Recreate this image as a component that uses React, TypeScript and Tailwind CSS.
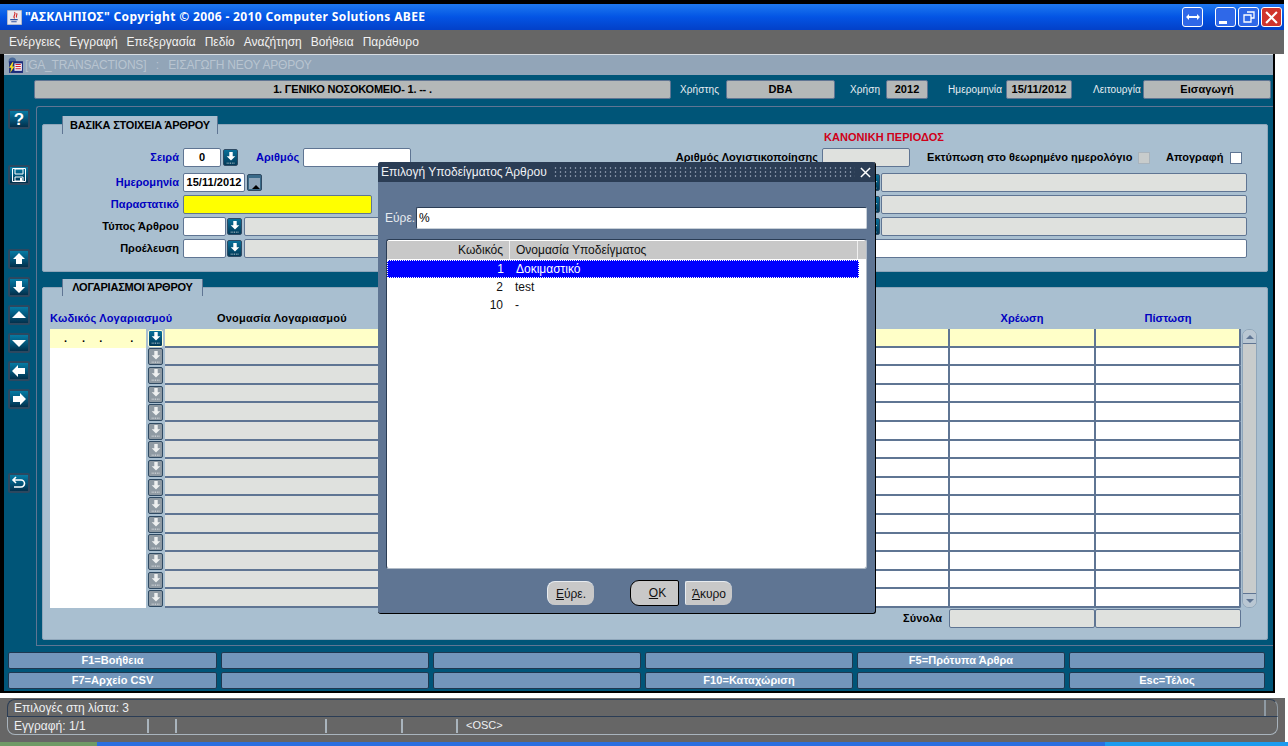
const labelBase = "font-['Liberation_Sans',sans-serif] text-[11px] font-bold tracking-[0.05px]"
const capsLabel = "font-['Liberation_Sans',sans-serif] text-[11px] font-bold tracking-[-0.2px]"
const plainText = "font-['Liberation_Sans',sans-serif] text-[12px]"

function ArrowDown({ dim }: { dim?: boolean }) {
  return (
    <svg viewBox="0 0 14 16" className="h-[14px] w-[12px]">
      <polygon points="5,1 9,1 9,6 12,6 7,11 2,6 5,6" fill={dim ? '#eef0f0' : '#ffffff'} />
      <line x1="2" y1="14" x2="12" y2="14" stroke="#ffffff" strokeWidth="1" strokeDasharray="1 1" />
    </svg>
  )
}

function LovButton({ dim, focus }: { dim?: boolean; focus?: boolean }) {
  const tone = dim
    ? 'bg-[#8f9aa3] border-[#2f4a63]'
    : focus
      ? 'bg-linear-to-b from-[#0a7099] to-[#023a58] border-[#ffffd8]'
      : 'bg-linear-to-b from-[#0a7099] to-[#023a58] border-[#2f4a63]'
  return (
    <div className={`flex h-[17px] w-[15px] shrink-0 items-center justify-center rounded-[2px] border ${tone}`}>
      <ArrowDown dim={dim} />
    </div>
  )
}

function RailButton({ children, className = '' }: { children: React.ReactNode; className?: string }) {
  return (
    <div className={`flex h-[20px] w-[22px] items-center justify-center rounded-[2px] border-2 border-[#2c4860] bg-linear-to-b from-[#067aa3] via-[#03577c] to-[#02304c] ${className}`}>
      {children}
    </div>
  )
}

function RailIcon({ d }: { d: string }) {
  return (
    <svg viewBox="0 0 16 14" className="h-[14px] w-[16px]">
      <path d={d} fill="#ffffff" />
    </svg>
  )
}

function Rail() {
  return (
    <div className="flex w-[32px] shrink-0 flex-col pl-[4px] pt-[3px]">
      <RailButton>
        <span className="font-['Liberation_Sans',sans-serif] text-[17px] leading-none font-bold text-white">?</span>
      </RailButton>
      <RailButton className="mt-[36px]">
        <svg viewBox="0 0 16 16" className="h-[16px] w-[16px]">
          <path d="M1.5 1.5h13v13h-13z" fill="none" stroke="#fff" />
          <path d="M4 2h8v5H4zM4 10h8v4H4z" fill="none" stroke="#fff" />
          <path d="M9 11h2v3H9z" fill="#fff" />
        </svg>
      </RailButton>
      <RailButton className="mt-[64px]"><RailIcon d="M8 1l6 6h-3v5H5V7H2z" /></RailButton>
      <RailButton className="mt-[8px]"><RailIcon d="M5 1h6v6h3l-6 6-6-6h3z" /></RailButton>
      <RailButton className="mt-[8px]"><RailIcon d="M8 3l7 7H1z" /></RailButton>
      <RailButton className="mt-[8px]"><RailIcon d="M1 4h14l-7 7z" /></RailButton>
      <RailButton className="mt-[8px]"><RailIcon d="M1 7l6-6v3h7v6H7v3z" /></RailButton>
      <RailButton className="mt-[8px]"><RailIcon d="M15 7L9 1v3H2v6h7v3z" /></RailButton>
      <RailButton className="mt-[64px]">
        <svg viewBox="0 0 16 14" className="h-[14px] w-[16px]">
          <path d="M5 1L2 4l3 3M2 4h8a3.5 3.5 0 0 1 0 7H3" fill="none" stroke="#fff" strokeWidth="1.6" />
        </svg>
      </RailButton>
    </div>
  )
}

function Field({ width, tone = 'white', text, className = '', caps }: { width: number; tone?: 'white' | 'gray' | 'yellow' | 'hdr'; text?: string; className?: string; caps?: boolean }) {
  const bg = {
    white: 'bg-white',
    gray: 'bg-[#dfe1de]',
    yellow: 'bg-[#ffff00]',
    hdr: 'bg-[#b4b8b8]',
  }[tone]
  return (
    <div
      style={{ width }}
      className={`flex h-[19px] shrink-0 items-center justify-center rounded-[2px] border border-[#5f7593] text-black ${caps ? capsLabel : labelBase} ${bg} ${className}`}
    >
      {text}
    </div>
  )
}

function RowLabel({ text, blue }: { text: string; blue?: boolean }) {
  return (
    <div className={`w-[137px] shrink-0 pr-[1px] text-right ${labelBase} ${blue ? 'text-[#0000c0]' : 'text-black'}`}>{text}</div>
  )
}

function CalendarButton() {
  return (
    <div className="ml-[2px] flex h-[17px] w-[15px] items-end justify-center rounded-[2px] border border-[#2f4a63] bg-[#3a6a88] pb-[1px]">
      <div className="relative h-[11px] w-[11px] bg-[#8fa6ba]">
        <div className="absolute right-0 bottom-0 h-0 w-0 border-x-[4px] border-b-[4px] border-x-transparent border-b-black" />
      </div>
    </div>
  )
}

function TopPanel() {
  return (
    <div className="relative h-[148px] w-[1226px] rounded-[2px] border border-[#8fa6ba] bg-[#a9bfd0] pt-[4px]">
      <div className={`absolute top-[-9px] left-[19px] flex h-[18px] w-[156px] items-center justify-center border-x border-[#5f7593] bg-[#a9bfd0] text-black ${capsLabel}`}>
        ΒΑΣΙΚΑ ΣΤΟΙΧΕΙΑ ΆΡΘΡΟΥ
      </div>
      <div className={`ml-[781px] h-[16px] leading-[16px] text-[#d00018] ${labelBase} tracking-[0.2px]`}>ΚΑΝΟΝΙΚΗ ΠΕΡΙΟΔΟΣ</div>

      <div className="mt-[3px] flex h-[19px] items-center">
        <RowLabel text="Σειρά" blue />
        <Field width={38} text="0" className="ml-[3px]" />
        <div className="ml-[2px]"><LovButton /></div>
        <div className={`ml-[18px] w-[43px] whitespace-nowrap text-right text-[#0000c0] ${labelBase}`}>Αριθμός</div>
        <Field width={108} className="ml-[4px]" />
        <div className={`ml-[261px] w-[146px] text-right whitespace-nowrap text-black ${labelBase}`}>Αριθμός Λογιστικοποίησης</div>
        <Field width={88} tone="gray" className="ml-[4px]" />
        <div className={`ml-[17px] w-[206px] whitespace-nowrap text-black ${labelBase}`}>Εκτύπωση στο θεωρημένο ημερολόγιο</div>
        <div className="ml-[5px] h-[12px] w-[12px] border border-[#a9b4bd] bg-[#c8cccc]" />
        <div className={`ml-[16px] w-[60px] text-black ${labelBase}`}>Απογραφή</div>
        <div className="ml-[4px] h-[12px] w-[12px] border border-[#5f7593] bg-white" />
      </div>

      <div className="mt-[6px] flex h-[19px] items-center">
        <RowLabel text="Ημερομηνία" blue />
        <Field width={62} text="15/11/2012" className="ml-[3px]" />
        <CalendarButton />
        <div className="ml-[603px]"><LovButton /></div>
        <Field width={366} tone="gray" className="ml-[1px]" />
      </div>

      <div className="mt-[3px] flex h-[19px] items-center">
        <RowLabel text="Παραστατικό" blue />
        <Field width={189} tone="yellow" className="ml-[3px]" />
        <div className="ml-[493px]"><LovButton /></div>
        <Field width={366} tone="gray" className="ml-[1px]" />
      </div>

      <div className="mt-[3px] flex h-[19px] items-center">
        <RowLabel text="Τύπος Άρθρου" />
        <Field width={43} className="ml-[3px]" />
        <div className="ml-[1px]"><LovButton /></div>
        <Field width={620} tone="gray" className="ml-[2px]" />
        <div className="ml-[1px]"><LovButton /></div>
        <Field width={366} tone="gray" className="ml-[1px]" />
      </div>

      <div className="mt-[3px] flex h-[19px] items-center">
        <RowLabel text="Προέλευση" />
        <Field width={43} className="ml-[3px]" />
        <div className="ml-[1px]"><LovButton /></div>
        <Field width={200} tone="gray" className="ml-[2px]" />
        <Field width={801} className="ml-[2px]" />
      </div>
    </div>
  )
}

function ScrollBar() {
  return (
    <div className="ml-[1px] flex h-[279px] w-[15px] flex-col overflow-hidden rounded-[7px] border border-[#8fa6ba] bg-[#c8cccc]">
      <div className="flex h-[14px] items-center justify-center border-b border-[#5f7593] bg-[#b9c7d3]">
        <div className="h-0 w-0 border-x-[4px] border-b-[4px] border-x-transparent border-b-[#5f7593]" />
      </div>
      <div className="flex-1" />
      <div className="flex h-[14px] items-center justify-center border-t border-[#5f7593] bg-[#b9c7d3]">
        <div className="h-0 w-0 border-x-[4px] border-t-[4px] border-x-transparent border-t-[#5f7593]" />
      </div>
    </div>
  )
}

function AccountRow({ first }: { first: boolean }) {
  const filled = first ? 'bg-[#ffffc8]' : 'bg-white'
  const line = 'border-b-2 border-[#5f7593]'
  return (
    <div className="flex h-[18.6px]">
      <div className={`flex w-[96px] shrink-0 items-center ${first ? 'bg-[#ffffc8]' : 'bg-white'} text-black ${labelBase}`}>
        {first && (
          <>
            <span className="ml-[14px]">.</span>
            <span className="ml-[15px]">.</span>
            <span className="ml-[14px]">.</span>
            <span className="ml-[28px]">.</span>
          </>
        )}
      </div>
      <div className="flex w-[19px] shrink-0 items-center justify-center">
        <LovButton dim={!first} focus={first} />
      </div>
      <div className={`w-[500px] shrink-0 ${first ? 'bg-[#ffffc8]' : 'bg-[#dfe1de]'} ${line}`} />
      <div className={`w-[285px] shrink-0 ${filled} ${line} border-r-2`} />
      <div className={`w-[146px] shrink-0 ${filled} ${line} border-r-2`} />
      <div className={`w-[145px] shrink-0 rounded-br-[2px] ${filled} ${line} border-r-2`} />
    </div>
  )
}

function AccountsPanel() {
  return (
    <div className="relative mt-[15px] h-[353px] w-[1226px] rounded-[2px] border border-[#8fa6ba] bg-[#a9bfd0] pt-[22px]">
      <div className={`absolute top-[-9px] left-[19px] flex h-[17px] w-[141px] items-center justify-center border-x border-[#5f7593] bg-[#a9bfd0] text-black ${capsLabel}`}>
        ΛΟΓΑΡΙΑΣΜΟΙ ΆΡΘΡΟΥ
      </div>
      <div className={`flex h-[16px] items-center whitespace-nowrap ${labelBase}`}>
        <div className="ml-[7px] w-[130px] tracking-[0.2px] text-[#0000c0]">Κωδικός Λογαριασμού</div>
        <div className="ml-[37px] w-[132px] tracking-[0.2px] text-black">Ονομασία Λογαριασμού</div>
        <div className="ml-[600px] w-[146px] text-center text-[#0000c0]">Χρέωση</div>
        <div className="w-[146px] text-center text-[#0000c0]">Πίστωση</div>
      </div>
      <div className="mt-[3px] ml-[7px] flex">
        <div className="w-[1191px] shrink-0">
          {Array.from({ length: 15 }, (_, i) => (
            <AccountRow key={i} first={i === 0} />
          ))}
        </div>
        <ScrollBar />
      </div>
      <div className={`mt-[1px] flex h-[19px] items-center text-black ${labelBase}`}>
        <div className="w-[899px] text-right">Σύνολα</div>
        <Field width={146} tone="gray" className="ml-[7px]" />
        <Field width={146} tone="gray" />
      </div>
    </div>
  )
}

function FooterKey({ text, width }: { text?: string; width: number }) {
  return (
    <div
      style={{ width }}
      className={`flex h-[17px] items-center justify-center rounded-[2px] border border-[#1f3850] bg-[#7396bb] text-white ${labelBase}`}
    >
      {text}
    </div>
  )
}

const footerTop = ['F1=Βοήθεια', '', '', '', 'F5=Πρότυπα Άρθρα', '']
const footerBottom = ['F7=Αρχείο CSV', '', '', 'F10=Καταχώριση', '', 'Esc=Τέλος']
const footerWidths = [209, 208, 208, 208, 208, 196]

function LovDialog() {
  const rows = [
    { code: '1', name: 'Δοκιμαστικό' },
    { code: '2', name: 'test' },
    { code: '10', name: '-' },
  ]
  return (
    <div className="absolute top-[162px] left-[378px] h-[452px] w-[498px] rounded-[3px] border-r border-b border-black bg-[#5f7593]">
      <div className="flex h-[20px] items-center rounded-t-[3px] bg-[#2b3d55] pl-[3px]">
        <span className={`w-[172px] shrink-0 whitespace-nowrap text-[#f0f2f5] ${plainText}`}>Επιλογή Υποδείγματος Άρθρου</span>
        <div className="h-[12px] w-[302px] bg-[radial-gradient(#7d8ba0_1px,transparent_1.2px)] bg-[length:5px_4px]" />
        <svg viewBox="0 0 12 12" className="ml-[5px] h-[11px] w-[11px]">
          <path d="M1 1l10 10M11 1L1 11" stroke="#fff" strokeWidth="1.6" />
        </svg>
      </div>

      <div className="mt-[25px] flex h-[22px] items-center pl-[7px]">
        <span className={`w-[31px] text-[#e8ecf0] ${plainText}`}>Εύρε.</span>
        <div className={`flex h-[22px] w-[451px] items-center rounded-[2px] border border-[#2b3d55] border-r-[#c8d0d8] border-b-[#c8d0d8] bg-white pl-[2px] text-black ${plainText}`}>%</div>
      </div>

      <div className="mt-[10px] ml-[8px] h-[330px] w-[481px] rounded-[3px] border border-[#2b3d55] border-r-[#b0bac6] border-b-[#b0bac6] bg-white pt-[1px]">
        <div className={`flex h-[18px] items-center bg-[#c8c8c8] text-[#111] ${plainText}`}>
          <div className="w-[122px] pr-[6px] text-right">Κωδικός</div>
          <div className="h-full w-[349px] border-x border-[#f0f0f0] pl-[6px] leading-[18px]">Ονομασία Υποδείγματος</div>
          <div className="flex-1" />
        </div>
        <div className="mt-[1px] w-[472px]">
          {rows.map((row, i) => (
            <div
              key={row.code}
              className={`flex h-[18px] items-center ${plainText} ${i === 0 ? 'border border-dotted border-white bg-[#0000ff] text-white' : 'text-[#111]'}`}
            >
              <div className="w-[122px] pr-[6px] text-right">{row.code}</div>
              <div className="pl-[6px]">{row.name}</div>
            </div>
          ))}
        </div>
      </div>

      <div className={`mt-[11px] flex items-center text-[#111] ${plainText}`}>
        <div className="ml-[169px] flex h-[24px] w-[47px] items-center justify-center rounded-[8px] border-t border-l border-[#e8ecf0] bg-[#c8c8c8]">
          <span><span className="underline">Ε</span>ύρε.</span>
        </div>
        <div className="ml-[36px] flex h-[26px] w-[49px] items-center justify-center rounded-l-[9px] rounded-r-[2px] border border-black bg-[#c8c8c8] pl-[6px]">
          <span><span className="underline">O</span>K</span>
        </div>
        <div className="ml-[6px] flex h-[24px] w-[47px] items-center justify-center rounded-r-[8px] rounded-l-[2px] border-t border-l border-[#e8ecf0] bg-[#c8c8c8]">
          <span><span className="underline">Ά</span>κυρο</span>
        </div>
      </div>
    </div>
  )
}

function CaptionButton({ red, children, className = '' }: { red?: boolean; children: React.ReactNode; className?: string }) {
  return (
    <div className={`flex h-[20px] w-[21px] items-center justify-center rounded-[3px] border border-white ${red ? 'bg-[#d0342c]' : 'bg-[#2f68e8]'} ${className}`}>
      {children}
    </div>
  )
}

function TitleBar() {
  return (
    <div className="flex h-[26px] items-center bg-linear-to-b from-[#1f78f0] via-[#0454e4] to-[#0340c8] pl-[7px]">
      <svg viewBox="0 0 14 14" className="h-[15px] w-[15px] shrink-0">
        <rect width="14" height="14" fill="#e8e8f0" stroke="#8090b0" />
        <path d="M7 2c2 2-2 3 0 6M9 3c1 2-1 2 0 4" stroke="#d02020" fill="none" />
        <path d="M3 9h7M4 11h5" stroke="#3050a0" />
      </svg>
      <span className="ml-[3px] w-[1157px] font-['Noto_Sans',sans-serif] text-[12px] font-bold tracking-[0.36px] whitespace-nowrap text-white">
        "ΑΣΚΛΗΠΙΟΣ" Copyright © 2006 - 2010 Computer Solutions ABEE
      </span>
      <CaptionButton>
        <svg viewBox="0 0 14 8" className="h-[8px] w-[14px]"><path d="M0 4l3-3v2h8V1l3 3-3 3V5H3v2z" fill="#fff" /></svg>
      </CaptionButton>
      <CaptionButton className="ml-[12px]">
        <div className="mt-[10px] mr-[6px] h-[3px] w-[8px] bg-white" />
      </CaptionButton>
      <CaptionButton className="ml-[2px]">
        <svg viewBox="0 0 12 12" className="h-[12px] w-[12px]"><path d="M4 1h7v6H8M1 4h7v7H1z" fill="none" stroke="#fff" strokeWidth="1.3" /></svg>
      </CaptionButton>
      <CaptionButton red className="ml-[2px]">
        <svg viewBox="0 0 12 12" className="h-[13px] w-[13px]"><path d="M1 1l10 10M11 1L1 11" stroke="#fff" strokeWidth="2" /></svg>
      </CaptionButton>
    </div>
  )
}

const menuItems = ['Ενέργειες', 'Εγγραφή', 'Επεξεργασία', 'Πεδίο', 'Αναζήτηση', 'Βοήθεια', 'Παράθυρο']

function HeaderLabel({ text, className }: { text: string; className: string }) {
  return <span className={`whitespace-nowrap text-[#e8eef2] font-['Liberation_Sans',sans-serif] text-[10px] tracking-[0.1px] ${className}`}>{text}</span>
}

function StatusBar() {
  const seps = [146, 28, 150, 76, 55]
  return (
    <div className={`mt-[5px] h-[44px] w-[1285px] bg-[#666666] pt-[1px] text-[#eef0f2] ${plainText}`}>
      <div className="mx-[7px] flex h-[18px] items-center rounded-tl-[8px] rounded-tr-[8px] border border-[#2b3d55] border-r-[#8f9aa3] pl-[6px]">
        <span>Επιλογές στη λίστα: 3</span>
        <div className="mr-[11px] ml-auto h-[16px] w-[2px] border-x border-[#8f9aa3] bg-[#444]" />
      </div>
      <div className="mx-[7px] flex h-[18px] items-center rounded-b-[8px] border-x border-b border-[#a9b4bd] pl-[6px]">
        <span className="w-[133px] shrink-0">Εγγραφή: 1/1</span>
        {seps.map((w, i) => (
          <div key={i} style={{ marginLeft: i === 0 ? 0 : w - 2 }} className="h-[14px] w-[2px] shrink-0 border-x border-[#a9b4bd] bg-[#444]" />
        ))}
        <span className="ml-[8px] text-[11px]">&lt;OSC&gt;</span>
      </div>
    </div>
  )
}

export default function App() {
  return (
    <div className="relative h-[746px] w-[1288px] overflow-hidden bg-white">
      <div className="w-[1284px]">
        <div className="h-[4px] bg-black" />
        <TitleBar />
        <div className="flex h-[24px] items-center gap-[9px] bg-[#666666] pl-[9px]">
          {menuItems.map((item) => (
            <span key={item} className={`text-[#f2f2f2] ${plainText}`}>{item}</span>
          ))}
        </div>
      </div>

      <div className="h-[639px] w-[1275px] bg-black pl-[4px]">
        <div className="h-[637px] w-[1269px] bg-[#005578]">
          <div className="flex h-[21px] items-center border-t border-[#d8dde2] bg-[#92a5b8] pl-[3px]">
            <svg viewBox="0 0 16 16" className="h-[17px] w-[17px] shrink-0">
              <circle cx="5" cy="4" r="3.5" fill="#4a6a9a" />
              <rect x="2" y="4" width="13" height="11" fill="#1a2a7a" />
              <rect x="7" y="6" width="7" height="7" fill="#f0f0f8" />
              <path d="M5 5L2 10h2l-1 5 4-6H5l1-4z" fill="#f8e020" />
              <path d="M8 7h5M8 9h5M8 11h5" stroke="#d02030" />
            </svg>
            <span className="ml-[1px] font-['Liberation_Sans',sans-serif] text-[12px] tracking-[-0.2px] whitespace-pre text-[#b8c4d0]">[GA_TRANSACTIONS]   :   ΕΙΣΑΓΩΓΗ ΝΕΟΥ ΑΡΘΡΟΥ</span>
          </div>

          <div className="mt-[5px] flex h-[19px] items-center pl-[30px]">
            <Field width={637} tone="hdr" caps text="1. ΓΕΝΙΚΟ ΝΟΣΟΚΟΜΕΙΟ- 1. -- ." />
            <HeaderLabel text="Χρήστης" className="ml-[9px] w-[46px]" />
            <Field width={109} tone="hdr" text="DBA" />
            <HeaderLabel text="Χρήση" className="ml-[15px] w-[36px]" />
            <Field width={42} tone="hdr" text="2012" />
            <HeaderLabel text="Ημερομηνία" className="ml-[20px] w-[58px]" />
            <Field width={66} tone="hdr" text="15/11/2012" />
            <HeaderLabel text="Λειτουργία" className="ml-[21px] w-[50px]" />
            <Field width={128} tone="hdr" text="Εισαγωγή" />
          </div>

          <div className="mt-[7px] flex">
            <Rail />
            <div className="h-[540px] w-[1237px] rounded-tl-[3px] border-y border-l border-[#5f7593] pt-[17px] pl-[5px]">
              <TopPanel />
              <AccountsPanel />
            </div>
          </div>

          <div className="mt-[6px] flex gap-[4px] pl-[4px]">
            {footerTop.map((text, i) => (
              <FooterKey key={i} text={text} width={footerWidths[i]} />
            ))}
          </div>
          <div className="mt-[3px] flex gap-[4px] pl-[4px]">
            {footerBottom.map((text, i) => (
              <FooterKey key={i} text={text} width={footerWidths[i]} />
            ))}
          </div>
        </div>
      </div>

      <StatusBar />

      <div className="flex h-[4px]">
        <div className="w-[97px] bg-[#6f9a66]" />
        <div className="w-[1008px] bg-[#2a6fe0]" />
        <div className="flex-1 bg-[#1b9bef]" />
      </div>

      <LovDialog />
    </div>
  )
}
